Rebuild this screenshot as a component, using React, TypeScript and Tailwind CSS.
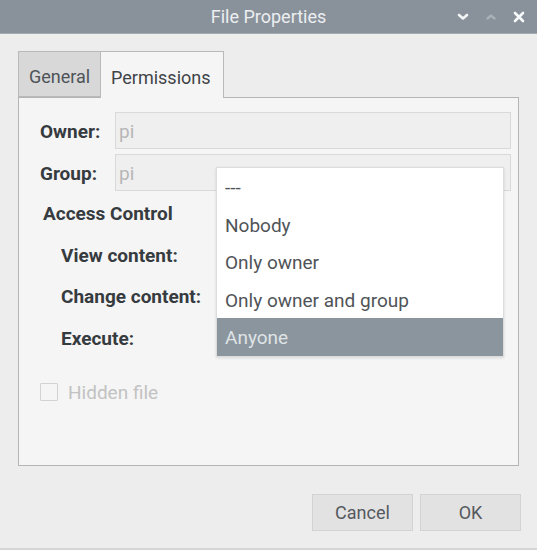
import React from "react";

function ChevronDown() {
  return (
    <svg width="12" height="8" viewBox="0 0 12 8" fill="none">
      <path d="M2 2 L6 5.5 L10 2" stroke="#f4f5f6" strokeWidth="2.6" strokeLinecap="round" strokeLinejoin="round" />
    </svg>
  );
}
function ChevronUp() {
  return (
    <svg width="12" height="8" viewBox="0 0 12 8" fill="none">
      <path d="M2.5 5.5 L6 2.5 L9.5 5.5" stroke="#a9b0b6" strokeWidth="2.4" strokeLinecap="round" strokeLinejoin="round" />
    </svg>
  );
}
function CloseX() {
  return (
    <svg width="12" height="12" viewBox="0 0 12 12" fill="none">
      <path d="M2 2 L10 10 M10 2 L2 10" stroke="#f8f9fa" strokeWidth="2.6" strokeLinecap="round" />
    </svg>
  );
}

export default function App() {
  const items = ["---", "Nobody", "Only owner", "Only owner and group", "Anyone"];
  return (
    <div className="relative w-[537px] h-[550px] bg-[#ededed] flex flex-col overflow-hidden font-[Roboto,sans-serif] border-b-2 border-[#d6d6d6]">
      {/* Title bar */}
      <div className="relative h-[34px] shrink-0 bg-[#89929b] border-b border-[#a3abb2] flex items-center justify-center">
        <span className="text-[18px] text-[#eceef0] leading-none">File Properties</span>
        <div className="absolute right-[12px] top-0 h-full flex items-center gap-[16px]">
          <ChevronDown />
          <ChevronUp />
          <CloseX />
        </div>
      </div>

      {/* Body */}
      <div className="flex flex-col px-[18px] pt-[17px]">
        {/* Tabs */}
        <div className="flex h-[46px] items-stretch relative z-10">
          <div className="w-[83px] bg-[#d8d8d8] border border-[#b9b9b9] flex items-center pl-[10px] pt-[4px] text-[18px] text-[#4e5358]">
            General
          </div>
          <div className="w-[123px] bg-[#f5f5f5] border border-l-0 border-b-0 border-[#b9b9b9] -mb-px flex items-center pl-[10px] pt-[4px] text-[18px] text-[#3f4448]">
            Permissions
          </div>
        </div>

        {/* Frame */}
        <div className="h-[369px] bg-[#f5f5f5] border border-[#b5b5b5] flex flex-col pl-[21px] pr-[7px] pt-[14px]">
          <div className="flex items-center h-[37px]">
            <div className="w-[75px] pt-[4px] text-[19px] font-bold text-[#363b40]">Owner:</div>
            <div className="flex-1 h-full bg-[#efefef] border border-[#d9d9d9] flex items-center pl-[3px] pt-[3px] text-[19px] text-[#b7b7b7]">pi</div>
          </div>
          <div className="flex items-center h-[37px] mt-[5px]">
            <div className="w-[75px] pt-[3px] text-[19px] font-bold text-[#363b40]">Group:</div>
            <div className="flex-1 h-full bg-[#efefef] border border-[#d9d9d9] flex items-center pl-[3px] pt-[3px] text-[19px] text-[#b7b7b7]">pi</div>
          </div>
          <div className="flex items-center h-[42px] pl-[3px] pt-[5px] text-[19px] font-bold text-[#363b40]">Access Control</div>
          <div className="flex items-center h-[42px] pl-[21px] pt-[4px] text-[19px] font-bold text-[#363b40]">View content:</div>
          <div className="flex items-center h-[42px] pl-[21px] pt-[3px] text-[19px] font-bold text-[#363b40]">Change content:</div>
          <div className="flex items-center h-[42px] pl-[21px] pt-[2px] text-[19px] font-bold text-[#363b40]">Execute:</div>
          <div className="flex items-center h-[18px] mt-[24px] gap-[10px]">
            <div className="w-[18px] h-[18px] border border-[#d2d2d2] bg-[#f5f5f5] rounded-[1px]" />
            <span className="pt-[3px] text-[19px] text-[#c2c2c2]">Hidden file</span>
          </div>
        </div>

        {/* Buttons */}
        <div className="flex justify-end gap-[7px] mt-[28px] -mr-[2px]">
          <div className="w-[101px] h-[37px] bg-[#e2e2e2] border border-[#d3d3d3] flex items-center justify-center text-[18px] text-[#55595d]">Cancel</div>
          <div className="w-[101px] h-[37px] bg-[#e2e2e2] border border-[#d3d3d3] flex items-center justify-center text-[18px] text-[#55595d]">OK</div>
        </div>
      </div>

      {/* Dropdown popup */}
      <div className="absolute left-[216px] top-[167px] w-[288px] h-[190px] bg-white border border-[#dcdcdc] shadow-[0_1px_3px_rgba(0,0,0,0.12)] flex flex-col z-20">
        {items.map((it) => (
          <div
            key={it}
            className={
              it === "Anyone"
                ? "h-[38px] flex items-center pl-[8px] pt-[3px] text-[19px] bg-[#8b959e] text-[#dfe3e6]"
                : "h-[38px] flex items-center pl-[8px] pt-[3px] text-[19px] text-[#505458]"
            }
          >
            {it}
          </div>
        ))}
      </div>
    </div>
  );
}
